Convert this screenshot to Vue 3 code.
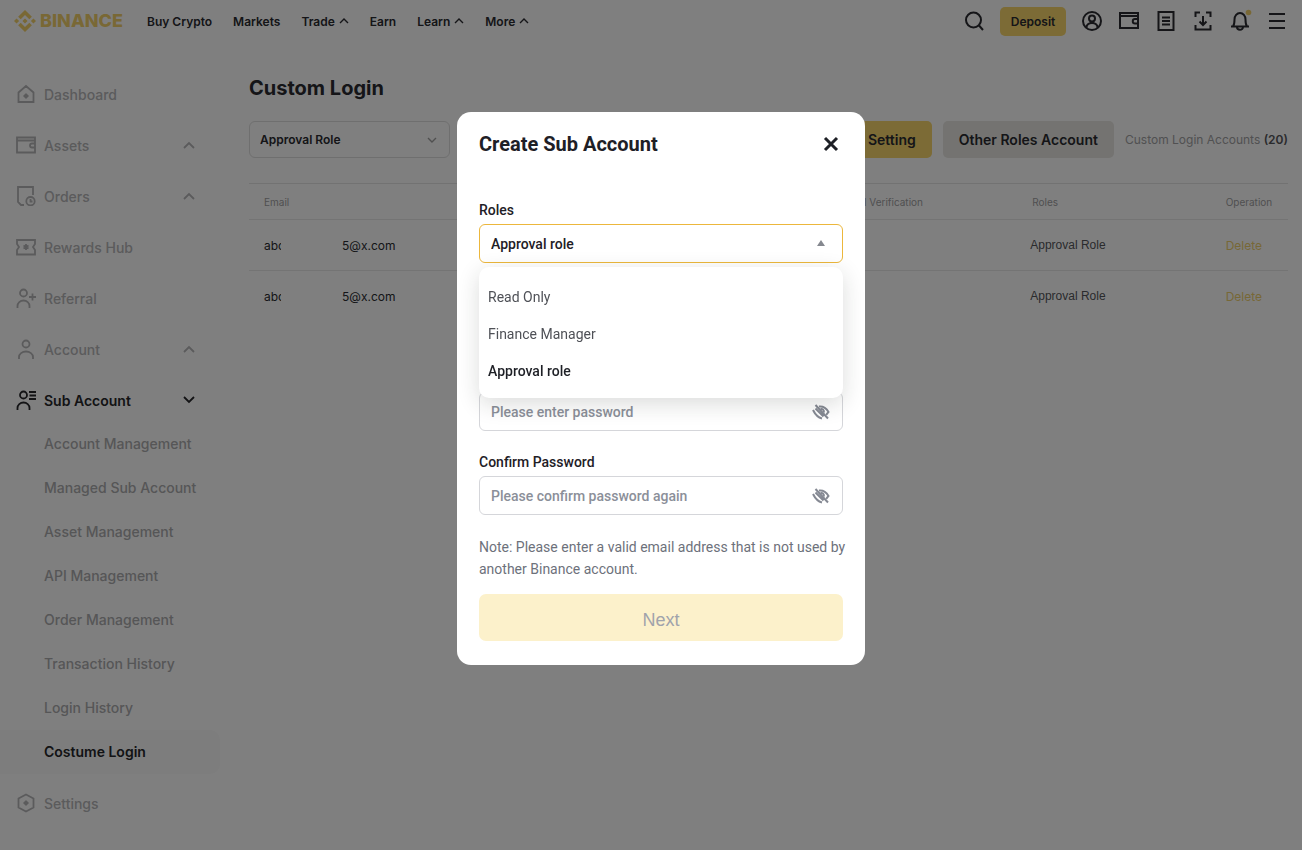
<template>
  <div class="page">
    <header class="topbar">
      <a href="#" class="logo">
        <svg width="22" height="22" viewBox="0 0 24 24" fill="currentColor">
          <path d="M7.3 10.1 12 5.4l4.7 4.7 2.8-2.7L12 0 4.5 7.4zM0 12l2.8-2.8L5.6 12l-2.8 2.8zM7.3 13.9 12 18.6l4.7-4.7 2.8 2.7L12 24l-7.5-7.4zM18.4 12l2.8-2.8L24 12l-2.8 2.8zM14.8 12 12 9.2 9.2 12l2.8 2.8z" />
        </svg>
        <span>BINANCE</span>
      </a>

      <nav class="nav">
        <a v-for="link in navLinks" :key="link.label" href="#">
          {{ link.label }}
          <svg v-if="link.menu" width="10" height="6" viewBox="0 0 10 6" class="stroke">
            <path d="m1 5 4-4 4 4" />
          </svg>
        </a>
      </nav>

      <div class="tools">
        <button class="tool" aria-label="Search">
          <svg viewBox="0 0 22 22" class="stroke">
            <circle cx="10.5" cy="10" r="7.5" />
            <path d="m16 15.500 4 4.500" />
          </svg>
        </button>
        <button class="deposit">Deposit</button>
        <button v-for="tool in tools" :key="tool.name" class="tool" :aria-label="tool.name">
          <svg viewBox="0 0 22 22" class="stroke">
            <path :d="tool.path" />
            <circle v-if="tool.dot" cx="19.5" cy="2.5" r="2.800" class="dot" />
          </svg>
        </button>
      </div>
    </header>

    <div class="body">
      <aside class="sidebar">
        <template v-for="item in menu" :key="item.label">
          <a href="#" class="item" :class="{ current: item.open }">
            <svg width="20" height="20" viewBox="1 1 20 20" class="stroke">
              <path :d="item.path" />
            </svg>
            <span>{{ item.label }}</span>
            <svg v-if="item.arrow" width="12" height="8" viewBox="0 0 12 8" class="stroke arrow">
              <path :d="item.open ? 'm1 1 5 5 5-5' : 'm1 7 5-5 5 5'" />
            </svg>
          </a>
          <div v-if="item.children" class="submenu">
            <a
              v-for="child in item.children"
              :key="child"
              href="#"
              :class="{ active: child === 'Costume Login' }"
            >{{ child }}</a>
          </div>
        </template>
      </aside>

      <main class="main">
        <h1>Custom Login</h1>

        <div class="toolbar">
          <div class="filter">
            <select aria-label="Role filter">
              <option>Approval Role</option>
            </select>
            <svg width="10" height="6" viewBox="0 0 10 6" class="stroke">
              <path d="m1 1 4 4 4-4" />
            </svg>
          </div>
          <button class="btn gold">Custom Login Setting</button>
          <button class="btn grey">Other Roles Account</button>
          <span class="count">Custom Login Accounts <b>(20)</b></span>
        </div>

        <table class="accounts">
          <thead>
            <tr>
              <th class="c-email">Email</th>
              <th class="c-label">Label</th>
              <th class="c-verify">Email Verification</th>
              <th class="c-roles">Roles</th>
              <th class="c-op">Operation</th>
            </tr>
          </thead>
          <tbody>
            <tr v-for="n in 2" :key="n">
              <td class="c-email">
                <span class="masked"><span class="head">abc</span><span>5@x.com</span></span>
              </td>
              <td></td>
              <td></td>
              <td class="role">Approval Role</td>
              <td><a href="#" class="delete">Delete</a></td>
            </tr>
          </tbody>
        </table>
      </main>
    </div>

    <div class="overlay">
      <form class="modal" role="dialog" aria-labelledby="modal-title" @submit.prevent>
        <div class="modal-head">
          <h2 id="modal-title">Create Sub Account</h2>
          <button type="button" class="close" aria-label="Close">
            <svg width="16" height="16" viewBox="0 0 16 16">
              <path d="m2 2 12 12M14 2 2 14" />
            </svg>
          </button>
        </div>

        <div class="field">
          <label for="role">Roles</label>
          <div class="box open">
            <select id="role" v-model="role">
              <option v-for="r in roles" :key="r">{{ r }}</option>
            </select>
            <svg width="10" height="7" viewBox="0 0 10 7" class="caret">
              <path d="M5 0 9 6H1z" />
            </svg>
            <div class="options">
              <button
                v-for="r in roles"
                :key="r"
                type="button"
                :class="{ picked: r === role }"
                @click="role = r"
              >{{ r }}</button>
            </div>
          </div>
        </div>

        <div class="field">
          <label for="email">Email</label>
          <div class="box">
            <input id="email" type="email" />
          </div>
        </div>

        <div v-for="f in passwords" :key="f.id" class="field">
          <label :for="f.id">{{ f.label }}</label>
          <div class="box">
            <input :id="f.id" type="password" :placeholder="f.hint" />
            <button type="button" class="eye" aria-label="Show password">
              <svg width="18" height="16" viewBox="0 0 18 16">
                <path d="M3.5 1 16 14.500M1 6c2 4 5 7.500 9 8.500M3.500 4.500 11.500 12.500" />
                <path d="M7 2.600c4.500-.6 7.500 2 9.500 5.400l-2.300 2.800" />
                <path d="M8.500 5c2.500-.3 3.800 1.300 3.300 3.500" />
              </svg>
            </button>
          </div>
        </div>

        <p class="note">
          Note: Please enter a valid email address that is not used by another Binance account.
        </p>
        <button type="submit" class="next">Next</button>
      </form>
    </div>
  </div>
</template>

<script setup>
import { ref } from 'vue'

const navLinks = [
  { label: 'Buy Crypto' },
  { label: 'Markets' },
  { label: 'Trade', menu: true },
  { label: 'Earn' },
  { label: 'Learn', menu: true },
  { label: 'More', menu: true }
]

const tools = [
  {
    name: 'Profile',
    path: 'M11 2a9 9 0 1 0 0 18 9 9 0 0 0 0-18M11 5.5a3 3 0 1 0 0 6 3 3 0 0 0 0-6M5.5 17.5c0-6 11-6 11 0'
  },
  { name: 'Wallet', path: 'M2 3h18v15H2zM2 6h18M20 9h-3a2 2 0 0 0 0 4.500h3' },
  { name: 'Orders', path: 'M3.500 2h15v18h-15zM7 7.500h8M7 11h8M7 14.500h8' },
  {
    name: 'Downloads',
    path: 'M3.500 7V2.500H8M14 2.500h4.500V7M3.500 15v4.500h15V15M11 6v9M7.500 11.500 11 15l3.500-3.500'
  },
  {
    name: 'Notifications',
    path: 'M2 16.500h18M4 16.500c1.500-2 1.500-4 1.500-7a5.500 6.500 0 0 1 11 0c0 3 0 5 1.500 7M8 17a3 2.800 0 0 0 6 0',
    dot: true
  },
  { name: 'Menu', path: 'M3 4h16M3 11h16M3 18h16' }
]

const menu = [
  {
    label: 'Dashboard',
    path: 'M3.500 9.500 11 3l7.500 6.500V19h-15zM11 10.500v5M8.500 13h5M9.500 11.500l3 3M12.500 11.500l-3 3'
  },
  {
    label: 'Assets',
    arrow: true,
    path: 'M2 3.500h18v15H2zM2 6.500h18M20 9.500h-3a2 2 0 0 0 0 4h3'
  },
  {
    label: 'Orders',
    arrow: true,
    path: 'M9 20H6l-3-3V2h15v8M15.500 12a4.200 4.200 0 1 0 0 8.400 4.200 4.200 0 0 0 0-8.400M15.500 14v2.500h2'
  },
  {
    label: 'Rewards Hub',
    path: 'M2 4h18v4l-2 3 2 3v4.500H2V14l2-3-2-3zM11 8v6M8.500 9.500l5 3M13.500 9.500l-5 3'
  },
  {
    label: 'Referral',
    path: 'M8.500 2.500a3.500 3.500 0 1 0 0 7 3.500 3.500 0 0 0 0-7M2.500 21v-2a6 5.500 0 0 1 12 0v2M14 10h7M17.500 6.500v7'
  },
  {
    label: 'Account',
    arrow: true,
    path: 'M11 2.500a3.500 3.500 0 1 0 0 7 3.500 3.500 0 0 0 0-7M4 21v-2a7 5.500 0 0 1 14 0v2'
  },
  {
    label: 'Sub Account',
    arrow: true,
    open: true,
    path: 'M8.500 2.500a3.500 3.500 0 1 0 0 7 3.500 3.500 0 0 0 0-7M2.500 21v-2a6 5.500 0 0 1 12 0v2M14 3h7M14.500 6.500H21M14 10h7',
    children: [
      'Account Management',
      'Managed Sub Account',
      'Asset Management',
      'API Management',
      'Order Management',
      'Transaction History',
      'Login History',
      'Costume Login'
    ]
  },
  {
    label: 'Settings',
    path: 'M11 2.500 18.500 6.500v9L11 19.500 3.500 15.500v-9zM11 8.500v5M8.500 11h5M9.500 9.500l3 3M12.500 9.500l-3 3'
  }
]

const roles = ['Read Only', 'Finance Manager', 'Approval role']
const role = ref('Approval role')

const passwords = [
  { id: 'password', label: 'Password', hint: 'Please enter password' },
  { id: 'confirm', label: 'Confirm Password', hint: 'Please confirm password again' }
]
</script>

<style>
body {
  margin: 0;
}
</style>

<style scoped>
.page {
  min-height: 100vh;
  background: #fff;
  color: #2a2b30;
  font-family: Inter, "Liberation Sans", sans-serif;
  font-size: 14px;
}

.page *,
.page {
  box-sizing: border-box;
}

a {
  color: inherit;
  text-decoration: none;
}

button,
select,
input {
  font: inherit;
  color: inherit;
  border: 0;
  padding: 0;
  background: none;
  outline: none;
}

svg {
  display: block;
  flex: none;
}

.stroke {
  fill: none;
  stroke: currentColor;
  stroke-width: 2;
}

.topbar {
  display: flex;
  align-items: center;
  height: 42px;
  padding: 0 14px;
}

.logo {
  display: flex;
  align-items: center;
  gap: 4px;
  width: 133px;
  color: #f2d16b;
  font-size: 18px;
  line-height: 20px;
  font-weight: 800;
}

.nav {
  display: flex;
  gap: 21px;
  font-size: 12px;
  font-weight: 600;
}

.nav a {
  display: flex;
  align-items: center;
  gap: 4px;
}

.nav .stroke,
.filter .stroke {
  stroke-width: 1.4;
}

.tools {
  display: flex;
  align-items: center;
  gap: 15px;
  margin-left: auto;
}

.tool svg {
  width: 22px;
  height: 22px;
  overflow: visible;
}

.dot {
  fill: #f2d16b;
  stroke: none;
}

.deposit {
  width: 66px;
  height: 29px;
  border-radius: 5px;
  background: #f8d66c;
  font-size: 12px;
  font-weight: 600;
}

.body {
  display: flex;
  padding-top: 30px;
}

.sidebar {
  display: flex;
  flex-direction: column;
  gap: 7px;
  width: 220px;
  flex: none;
  color: #b6b6b8;
  font-weight: 500;
}

.item {
  display: flex;
  align-items: center;
  gap: 8px;
  height: 44px;
  padding: 0 25px 0 16px;
}

.item .stroke {
  stroke-width: 1.8;
}

.item .arrow {
  margin-left: auto;
}

.item.current {
  color: #26272a;
  font-weight: 600;
}

.submenu {
  display: flex;
  flex-direction: column;
  margin-top: -7px;
  color: #acacae;
}

.submenu a {
  padding-left: 44px;
  line-height: 44px;
  border-radius: 0 10px 10px 0;
}

.submenu .active {
  background: #fafafa;
  color: #26272a;
  font-weight: 600;
}

.main {
  flex: 1;
  min-width: 0;
  padding: 0 14px 0 29px;
}

h1 {
  margin: 0;
  font-size: 20px;
  line-height: 32px;
  font-weight: 700;
}

.toolbar {
  display: flex;
  align-items: center;
  gap: 11px;
  margin: 17px 0 25px;
}

.filter {
  display: flex;
  align-items: center;
  width: 201px;
  height: 37px;
  margin-right: auto;
  padding: 0 12px 0 10px;
  border: 1px solid #dedede;
  border-radius: 6px;
}

.filter select,
.box select {
  flex: 1;
  appearance: none;
}

.filter select {
  font-size: 12px;
  font-weight: 600;
}

.filter svg {
  color: #a0a0a0;
}

.btn {
  height: 37px;
  padding: 0 16px;
  border-radius: 5px;
  font-size: 14px;
  font-weight: 600;
  white-space: nowrap;
}

.gold {
  background: #f8d66c;
}

.grey {
  background: #e8e7e2;
}

.count {
  color: #a2a2a4;
  font-size: 12px;
  white-space: nowrap;
}

.count b {
  color: #55565a;
  font-weight: 600;
}

.accounts {
  width: 100%;
  table-layout: fixed;
  border-collapse: collapse;
  border-top: 1px solid #e4e4e4;
}

th,
td {
  padding: 0;
  text-align: left;
  white-space: nowrap;
}

th {
  height: 36px;
  color: #a0a0a2;
  font-size: 10px;
  font-weight: 400;
}

td {
  height: 51px;
  font-size: 12px;
}

tr {
  border-bottom: 1px solid #e8e8e8;
}

tbody tr:last-child {
  border-bottom: 0;
}

.c-email {
  width: 20%;
  padding-left: 15px;
}

.c-label {
  width: 37%;
}

.c-verify {
  width: 18%;
}

.c-roles {
  width: 19%;
  padding-left: 4px;
}

.c-op {
  width: 6%;
}

.masked {
  display: flex;
  gap: 61px;
}

.head {
  width: 17px;
  overflow: hidden;
}

.role {
  padding-left: 2px;
  color: #55565a;
  font-family: "Liberation Sans", sans-serif;
}

.delete {
  color: #efd06e;
}

.overlay {
  position: fixed;
  inset: 0;
  display: flex;
  justify-content: center;
  align-items: flex-start;
  padding: 112px 0 0 20px;
  background: rgba(0, 0, 0, 0.5);
}

.modal {
  width: 408px;
  padding: 16px 22px 24px;
  border-radius: 14px;
  background: #fff;
  color: #1e2026;
  font-family: Roboto, "Liberation Sans", sans-serif;
  font-size: 14px;
}

.modal-head {
  display: flex;
  align-items: center;
  justify-content: space-between;
  height: 32px;
  margin-bottom: 40px;
}

h2 {
  margin: 0;
  font-size: 20px;
  font-weight: 700;
}

.close {
  padding: 0 4px;
}

.close path {
  stroke: currentColor;
  stroke-width: 3;
}

.field {
  margin-bottom: 21px;
}

.field label {
  display: block;
  margin-bottom: 4px;
  line-height: 20px;
  font-weight: 500;
}

.box {
  position: relative;
  display: flex;
  align-items: center;
  height: 39px;
  padding: 0 12px 0 11px;
  border: 1px solid #d5d6da;
  border-radius: 6px;
}

.box.open {
  border-color: #ecb73c;
  font-weight: 500;
}

.box input {
  flex: 1;
  min-width: 0;
}

.box input::placeholder {
  color: #8b8f99;
  font-weight: 500;
  opacity: 1;
}

.caret {
  margin-right: 4px;
  fill: #85888f;
}

.options {
  position: absolute;
  z-index: 1;
  top: 42px;
  left: -1px;
  right: -1px;
  display: flex;
  flex-direction: column;
  padding: 11px 0 9px;
  border-radius: 10px;
  background: #fff;
  box-shadow: 0 6px 22px rgba(30, 40, 30, 0.16);
}

.options button {
  height: 37px;
  padding: 0 9px;
  text-align: left;
  color: #4f5157;
  font-weight: 400;
}

.options .picked {
  color: #1e2026;
  font-weight: 500;
}

.eye {
  color: #858993;
}

.eye path {
  fill: none;
  stroke: currentColor;
  stroke-width: 2;
}

.note {
  margin: 0 -8px 14px 0;
  color: #6d717b;
  line-height: 22px;
}

.next {
  display: block;
  width: 100%;
  height: 47px;
  padding-top: 6px;
  border-radius: 7px;
  background: #fcf1cb;
  color: #a0a3ab;
  font-family: "Liberation Sans", sans-serif;
  font-size: 18px;
}
</style>
